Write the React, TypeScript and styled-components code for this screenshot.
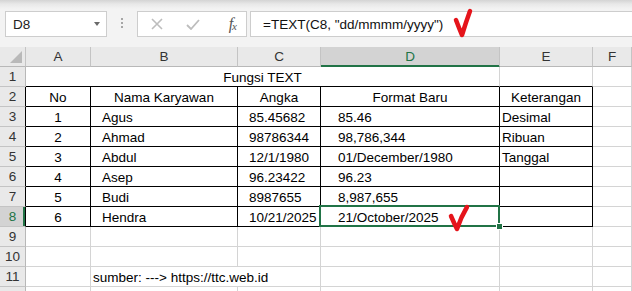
import React from 'react';
import styled, { createGlobalStyle } from 'styled-components';

const GlobalStyle = createGlobalStyle`
  html, body {
    margin: 0;
    padding: 0;
    background: #fff;
  }
  body {
    font-family: 'Liberation Sans', Arial, sans-serif;
  }
`;

const Window = styled.div`
  width: 632px;
  height: 291px;
  overflow: hidden;
  background: #fff;
  display: flex;
  flex-direction: column;
`;

const FormulaBar = styled.div`
  height: 47px;
  flex: none;
  box-sizing: border-box;
  padding: 11px 0 0 5px;
  display: flex;
  align-items: flex-start;
  background: linear-gradient(#d4d4d4 0, #e8e8e8 4px, #f3f3f3 9px);
`;

const NameBox = styled.div`
  width: 102px;
  height: 26px;
  box-sizing: border-box;
  border: 1px solid #cdcdcd;
  background: #fff;
  display: flex;
  align-items: center;
  justify-content: space-between;
  padding: 0 6px 0 7px;
  font-size: 13.5px;
  color: #222;
`;

const Caret = styled.span`
  width: 0;
  height: 0;
  border-left: 3.5px solid transparent;
  border-right: 3.5px solid transparent;
  border-top: 4px solid #6a6a6a;
`;

const Grip = styled.div`
  width: 2px;
  margin: 7px 14px 0 14px;
  display: flex;
  flex-direction: column;
  gap: 2px;

  & > span {
    width: 2px;
    height: 2px;
    background: #a6a6a6;
  }
`;

const ButtonBox = styled.div`
  width: 110px;
  height: 26px;
  box-sizing: border-box;
  border: 1px solid #cdcdcd;
  background: #fff;
  display: flex;
  align-items: center;
  padding: 0 10px 0 13px;

  & > svg {
    flex: none;
  }
`;

const Fx = styled.span`
  margin-left: auto;
  font-family: 'Liberation Serif', 'Times New Roman', serif;
  font-style: italic;
  font-size: 16px;
  color: #555;
  letter-spacing: -1px;

  & > sub {
    font-size: 11px;
    vertical-align: -1px;
  }
`;

const FormulaInput = styled.div`
  position: relative;
  margin-left: 3px;
  flex: 1;
  height: 26px;
  box-sizing: border-box;
  border: 1px solid #cdcdcd;
  border-right: none;
  background: #fff;
  display: flex;
  align-items: center;
  padding-left: 12px;
  font-size: 13.5px;
  color: #111;
  white-space: nowrap;
`;

const RedCheck = styled.svg<{ $left: number; $top: number }>`
  position: absolute;
  left: ${(p) => p.$left}px;
  top: ${(p) => p.$top}px;
  overflow: visible;
  pointer-events: none;
  z-index: 3;
`;

const Sheet = styled.div`
  display: grid;
  grid-template-columns: 26px 65px 147px 83px 179px 93px 1fr;
  grid-auto-rows: 20px;
  font-size: 13.5px;
`;

const Corner = styled.div`
  position: relative;
  box-sizing: border-box;
  background: #e9e9e9;
  border-right: 1px solid #c4c4c4;
  border-bottom: 1px solid #b8b8b8;

  &::after {
    content: '';
    position: absolute;
    right: 3px;
    bottom: 3px;
    border-left: 12px solid transparent;
    border-bottom: 12px solid #b9b9b9;
  }
`;

const ColHead = styled.div<{ $active?: boolean }>`
  box-sizing: border-box;
  display: flex;
  align-items: center;
  justify-content: center;
  background: ${(p) => (p.$active ? '#d3d3d3' : '#e9e9e9')};
  color: ${(p) => (p.$active ? '#217346' : '#333')};
  border-right: 1px solid #c4c4c4;
  border-bottom: 1px solid ${(p) => (p.$active ? '#217346' : '#b8b8b8')};
  box-shadow: ${(p) => (p.$active ? 'inset 0 -1px 0 #217346' : 'none')};
`;

const RowHead = styled.div<{ $active?: boolean; $edge?: boolean }>`
  box-sizing: border-box;
  display: flex;
  align-items: center;
  justify-content: center;
  background: ${(p) => (p.$active ? '#d3d3d3' : '#e9e9e9')};
  color: ${(p) => (p.$active ? '#217346' : '#333')};
  border-bottom: 1px solid #c4c4c4;
  border-right: 1px solid ${(p) => (p.$edge ? '#000' : '#b8b8b8')};
  box-shadow: ${(p) => (p.$active ? 'inset -2px 0 0 #217346' : 'none')};
`;

const Cell = styled.div<{
  $center?: boolean;
  $pad?: number;
  $span?: number;
  $boxed?: boolean;
  $topEdge?: boolean;
}>`
  position: relative;
  grid-column: span ${(p) => p.$span ?? 1};
  box-sizing: border-box;
  display: flex;
  align-items: flex-end;
  justify-content: ${(p) => (p.$center ? 'center' : 'flex-start')};
  padding-left: ${(p) => (p.$center ? 0 : p.$pad ?? 2)}px;
  border-right: 1px solid ${(p) => (p.$boxed ? '#000' : '#d4d4d4')};
  border-bottom: 1px solid ${(p) => (p.$boxed || p.$topEdge ? '#000' : '#d4d4d4')};
  line-height: 16px;
  color: #000;
  white-space: nowrap;
`;

const Selection = styled.div`
  position: absolute;
  top: -2px;
  left: -2px;
  right: -1px;
  bottom: -1px;
  border: 2px solid #217346;
  pointer-events: none;
  z-index: 2;
`;

const FillHandle = styled.span`
  position: absolute;
  right: -4px;
  bottom: -4px;
  width: 5px;
  height: 5px;
  background: #217346;
  box-shadow: 0 0 0 1px #fff;
`;

const letters = ['A', 'B', 'C', 'D', 'E', 'F'];
const pads = [0, 11, 11, 17, 2];

const rows: string[][] = [
  ['1', 'Agus', '85.45682', '85.46', 'Desimal'],
  ['2', 'Ahmad', '98786344', '98,786,344', 'Ribuan'],
  ['3', 'Abdul', '12/1/1980', '01/December/1980', 'Tanggal'],
  ['4', 'Asep', '96.23422', '96.23', ''],
  ['5', 'Budi', '8987655', '8,987,655', ''],
  ['6', 'Hendra', '10/21/2025', '21/October/2025', ''],
];

const headers = ['No', 'Nama Karyawan', 'Angka', 'Format Baru', 'Keterangan'];

const Check: React.FC<{ left: number; top: number; d: string; w: number; h: number }> = ({
  left,
  top,
  d,
  w,
  h,
}) => (
  <RedCheck $left={left} $top={top} width={w} height={h} viewBox={`0 0 ${w} ${h}`}>
    <path d={d} fill="none" stroke="#e5141b" strokeWidth={4.5} strokeLinecap="round" strokeLinejoin="round" />
  </RedCheck>
);

export default function App() {
  return (
    <Window>
      <GlobalStyle />
      <FormulaBar>
        <NameBox>
          D8
          <Caret />
        </NameBox>
        <Grip>
          <span />
          <span />
          <span />
        </Grip>
        <ButtonBox>
          <svg width="12" height="12" viewBox="0 0 12 12">
            <path d="M1 1L11 11M11 1L1 11" stroke="#bdbdbd" strokeWidth="1.6" />
          </svg>
          <svg width="14" height="11" viewBox="0 0 14 11" style={{ marginLeft: 23 }}>
            <path d="M1 6L5 10L13 1" fill="none" stroke="#bdbdbd" strokeWidth="1.8" />
          </svg>
          <Fx>
            f<sub>x</sub>
          </Fx>
        </ButtonBox>
        <FormulaInput>
          =TEXT(C8, "dd/mmmm/yyyy")
          <Check left={202} top={-4} w={18} h={30} d="M3 12 Q6 20 9 27 Q13 14 17 3" />
        </FormulaInput>
      </FormulaBar>

      <Sheet>
        <Corner />
        {letters.map((l) => (
          <ColHead key={l} $active={l === 'D'}>
            {l}
          </ColHead>
        ))}

        <RowHead>1</RowHead>
        <Cell $center $span={4} $topEdge>
          Fungsi TEXT
        </Cell>
        <Cell $topEdge />
        <Cell />

        <RowHead $edge>2</RowHead>
        {headers.map((h) => (
          <Cell key={h} $center $boxed>
            {h}
          </Cell>
        ))}
        <Cell />

        {rows.map((r, i) => {
          const n = i + 3;
          return (
            <React.Fragment key={n}>
              <RowHead $edge $active={n === 8}>
                {n}
              </RowHead>
              {r.map((v, c) => (
                <Cell key={c} $boxed $center={c === 0} $pad={pads[c]}>
                  {v}
                  {n === 8 && c === 3 && (
                    <>
                      <Selection>
                        <FillHandle />
                      </Selection>
                      <Check left={127} top={-2} w={22} h={27} d="M3 11 Q6 18 9 24 Q13 12 19 2" />
                    </>
                  )}
                </Cell>
              ))}
              <Cell />
            </React.Fragment>
          );
        })}

        {[9, 10].map((n) => (
          <React.Fragment key={n}>
            <RowHead>{n}</RowHead>
            {letters.map((l) => (
              <Cell key={l} />
            ))}
          </React.Fragment>
        ))}

        <RowHead>11</RowHead>
        <Cell />
        <Cell $span={2}>sumber: ---&gt; https://ttc.web.id</Cell>
        <Cell />
        <Cell />
        <Cell />

        <RowHead />
        {letters.map((l) => (
          <Cell key={l} />
        ))}
      </Sheet>
    </Window>
  );
}
